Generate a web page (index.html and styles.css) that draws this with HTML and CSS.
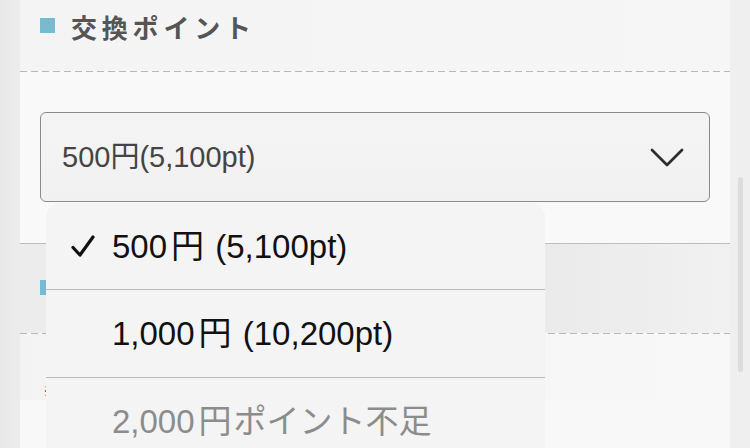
FILE: index.html
```html
<!DOCTYPE html>
<html lang="ja">
<head>
<meta charset="utf-8">
<title>交換ポイント</title>
<link rel="stylesheet" href="styles.css">
</head>
<body>
<div class="page">
  <main class="card">
    <section class="section">
      <header class="sec-head">
        <span class="sq"></span>
        <h2 class="sec-title">交換ポイント</h2>
      </header>
      <div class="dash"></div>
      <div class="sec-body">
        <div class="select">
          <span class="select-val">500円(5,100pt)</span>
          <svg class="chev" width="36" height="22" viewBox="0 0 36 22"><polyline points="3,3 18,18 33,3" fill="none" stroke="#2e2e2e" stroke-width="2.8" stroke-linecap="round" stroke-linejoin="round"/></svg>
        </div>
      </div>
    </section>
    <section class="section sec2">
      <header class="sec-head sec-head2">
        <span class="sq"></span>
        <h2 class="sec-title">交換方法</h2>
      </header>
      <div class="dash"></div>
      <div class="sec-body2">
        <p class="note">※ご注意ください</p>
      </div>
    </section>
  </main>
  <div class="gutter"><div class="thumb"></div></div>

  <ul class="menu">
    <li class="opt sel">
      <svg class="check" width="26" height="26" viewBox="0 0 26 26"><polyline points="3,13.5 10,21 23,3" fill="none" stroke="#111" stroke-width="3.2" stroke-linecap="round" stroke-linejoin="round"/></svg>
      <span>500<span class="yen">円</span> (5,100pt)</span>
    </li>
    <li class="opt"><span>1,000<span class="yen">円</span> (10,200pt)</span></li>
    <li class="opt dis"><span>2,000<span class="yen">円</span>ポイント不足</span></li>
  </ul>
</div>
</body>
</html>
```

FILE: styles.css
```css
html, body {
  margin: 0;
  padding: 0;
  height: 100%;
  overflow: hidden;
}
body {
  background: #ebebeb;
  font-family: "Liberation Sans", "Noto Sans CJK JP", sans-serif;
}
.page {
  position: relative;
  display: flex;
  height: 448px;
  background: linear-gradient(to right, #e8e8e8 0, #ececec 20px);
}
.card {
  margin-left: 20px;
  width: 710px;
  margin-top: -18px;
  background: #f8f8f8;
  display: flex;
  flex-direction: column;
}
.sec-head {
  height: 89px;
  display: flex;
  align-items: center;
  padding-left: 20px;
  background: linear-gradient(to right, #f4f4f4, #f6f6f6);
}
.sec-head2 {
  background: linear-gradient(to right, #ececec, #e9e9e9 70%, #f1f1f1);
}
.sq {
  width: 15px;
  height: 15px;
  background: #78bad0;
  margin-top: -3px;
}
.sec-title {
  margin: 0 0 0 16px;
  font-family: "Noto Sans CJK JP", sans-serif;
  font-size: 26px;
  font-weight: 700;
  letter-spacing: 4.8px;
  color: #555;
  line-height: 1;
}
.dash {
  height: 1px;
  background: repeating-linear-gradient(to right, #b8b8b8 0 7px, transparent 7px 11px);
}
.sec-body {
  padding: 40px 20px 41px 20px;
  background: #f9f9f9;
  border-bottom: 1.5px solid #bdbdbd;
}
.select {
  height: 88px;
  border: 1.5px solid #8a8a8a;
  border-radius: 6px;
  background: linear-gradient(to bottom, #f4f4f4, #f1f1f1);
  display: flex;
  align-items: center;
  justify-content: space-between;
  padding: 0 24px 0 21px;
}
.select-val {
  font-size: 29px;
  color: #444;
  line-height: 1;
}
.chev {
  display: block;
  margin-top: 2px;
}
.sec-body2 {
  flex: 1;
  background: linear-gradient(to right, #f3f3f3, #f8f8f8);
  padding: 46px 0 0 23px;
}
.note {
  margin: 0;
  font-size: 14px;
  color: #c0392b;
}
.gutter {
  flex: 1;
  background: #efefef;
  position: relative;
}
.thumb {
  position: absolute;
  left: 8px;
  top: 177px;
  width: 5px;
  height: 195px;
  border-radius: 3px;
  background: #dcdcdc;
}
.menu {
  position: absolute;
  left: 46px;
  top: 203px;
  width: 499px;
  margin: 0;
  padding: 0;
  list-style: none;
  background: #f4f4f4;
  border-radius: 14px 14px 0 0;
}
.opt {
  position: relative;
  height: 87px;
  display: flex;
  align-items: center;
  padding-left: 66px;
  font-size: 33px;
  color: #111;
  border-bottom: 1.2px solid #b9b9b9;
  line-height: 1;
}
.opt.sel {
  height: 86px;
}
.yen {
  margin: 0 2px 0 4px;
}
.dis {
  color: #8c8c8c;
  border-bottom: none;
}
.check {
  position: absolute;
  left: 24px;
  top: 31px;
}
```
